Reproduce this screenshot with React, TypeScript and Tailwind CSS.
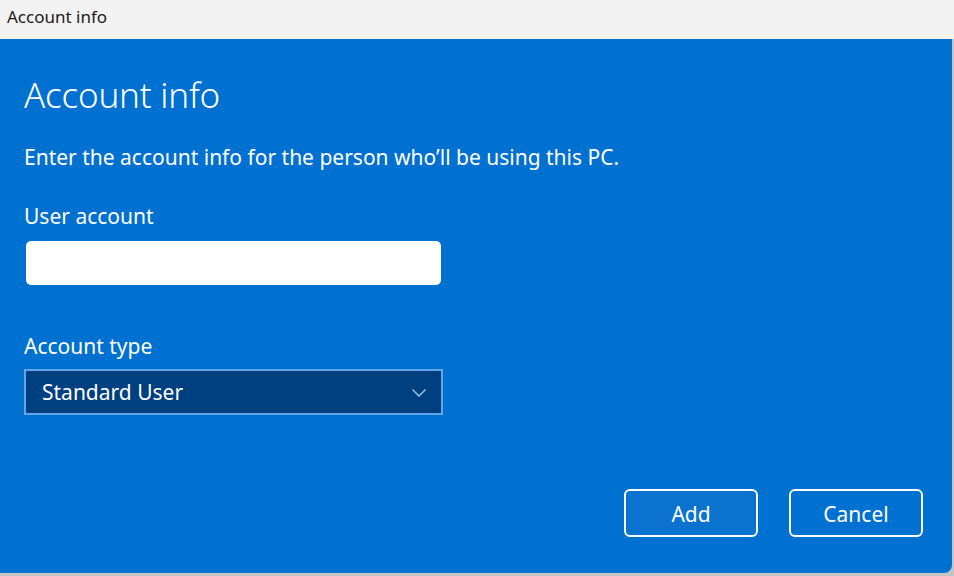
import React from 'react'

export default function App() {
  return (
    <div
      className="w-[954px] h-[576px] flex flex-col bg-[#c4c4c4] overflow-hidden"
      style={{ fontFamily: '"Noto Sans", "Open Sans", sans-serif' }}
    >
      {/* Title bar */}
      <div className="h-[39px] shrink-0 flex flex-col bg-[#f2f2f2]">
        <div className="h-[34px] flex items-center pl-[7px] text-[17px] text-[#1a1a1a]">Account info</div>
        <div className="h-[5px] bg-[#f7f4ec]" />
      </div>

      {/* Dialog body */}
      <div className="h-[534px] mr-[2px] flex flex-col bg-[#0070d1] rounded-br-[8px] text-white px-[24px]">
        <h1 className="mt-[34px] text-[35px] font-light leading-[44px] tracking-[-0.2px]">Account info</h1>
        <p className="mt-[26px] text-[21px] leading-[28px]">
          Enter the account info for the person who’ll be using this PC.
        </p>

        <label className="mt-[31px] text-[21px] leading-[28px]">User account</label>
        <input
          className="mt-[11px] ml-[2px] w-[415px] h-[44px] rounded-[5px] bg-white outline-none px-3 text-[20px] text-black"
          type="text"
        />

        <label className="mt-[47px] text-[21px] leading-[28px]">Account type</label>
        <div className="mt-[9px] w-[419px] h-[46px] border-2 border-[#62a6ea] bg-[#003f80] flex items-center justify-between pl-[16px] pr-[14px] pt-[2px]">
          <span className="text-[21px]">Standard User</span>
          <svg width="16" height="10" viewBox="0 0 16 10" fill="none">
            <path d="M1.5 1.5 L8 8 L14.5 1.5" stroke="#a9cdf2" strokeWidth="1.3" />
          </svg>
        </div>

        <div className="mt-[74px] flex justify-end gap-[31px] pr-[5px]">
          <button className="w-[134px] h-[48px] rounded-[6px] border-2 border-white bg-[#0a72cf] text-[21px] pt-[3px]">
            Add
          </button>
          <button className="w-[134px] h-[48px] rounded-[6px] border-2 border-white text-[21px] pt-[3px]">
            Cancel
          </button>
        </div>
      </div>
    </div>
  )
}
